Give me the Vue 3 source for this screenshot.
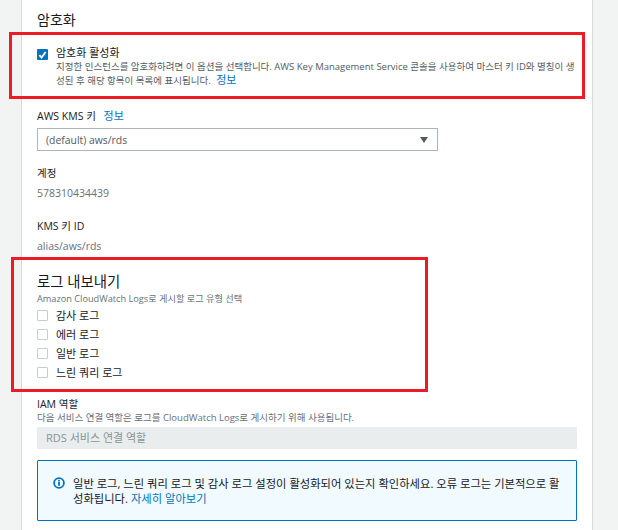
<template>
  <div class="page">
    <section class="panel">
      <h2 class="title">암호화</h2>

      <div class="enable-row">
        <span class="check on">
          <svg width="12" height="12" viewBox="0 0 12 12"><path d="M2.6 6.2 L5 8.8 L9.4 2.8" fill="none" stroke="#fff" stroke-width="2" /></svg>
        </span>
        <div class="enable-text">
          <div class="enable-label">암호화 활성화</div>
          <p class="desc-long">지정한 인스턴스를 암호화하려면 이 옵션을 선택합니다. AWS Key Management Service 콘솔을 사용하여 마스터 키 ID와 별칭이 생성된 후 해당 항목이 목록에 표시됩니다. <a class="link big">정보</a></p>
        </div>
      </div>

      <div class="kms-label">AWS KMS 키 <a class="link info">정보</a></div>
      <div class="select">
        <span>(default) aws/rds</span>
        <span class="caret"></span>
      </div>

      <div class="field-label account">계정</div>
      <div class="value">578310434439</div>
      <div class="field-label kms-id">KMS 키 ID</div>
      <div class="value">alias/aws/rds</div>

      <h3 class="log-title">로그 내보내기</h3>
      <div class="hint">Amazon CloudWatch Logs로 게시할 로그 유형 선택</div>
      <div class="log-list">
        <label v-for="item in logs" :key="item" class="log-row">
          <span class="check"></span>
          <span>{{ item }}</span>
        </label>
      </div>

      <div class="field-label iam">IAM 역할</div>
      <div class="hint iam-hint">다음 서비스 연결 역할은 로그를 CloudWatch Logs로 게시하기 위해 사용됩니다.</div>
      <div class="role-input">RDS 서비스 연결 역할</div>

      <div class="alert">
        <svg class="alert-icon" width="12" height="12" viewBox="0 0 12 12">
          <circle cx="6" cy="6" r="4.9" fill="none" stroke="#0073bb" stroke-width="1.8" />
          <rect x="5.1" y="5" width="1.8" height="3.8" fill="#0073bb" />
          <rect x="5.1" y="2.9" width="1.8" height="1.5" fill="#0073bb" />
        </svg>
        <p>일반 로그, 느린 쿼리 로그 및 감사 로그 설정이 활성화되어 있는지 확인하세요. 오류 로그는 기본적으로 활성화됩니다. <a class="link">자세히 알아보기</a></p>
      </div>
    </section>

    <div class="red-box box-one"></div>
    <div class="red-box box-two"></div>
  </div>
</template>

<script setup>
const logs = ['감사 로그', '에러 로그', '일반 로그', '느린 쿼리 로그']
</script>

<style>
html, body { margin: 0; background: #f2f3f3; }
</style>

<style scoped>
.page {
  position: relative;
  width: 618px;
  height: 530px;
  overflow: hidden;
  background: #f2f3f3;
  font-family: "Open Sans", "Noto Sans CJK KR", sans-serif;
  color: #16191f;
}
.panel {
  box-sizing: border-box;
  width: 572px;
  height: 530px;
  margin-left: 21px;
  padding: 0 15px 0 15px;
  background: #fff;
  border-left: 1px solid #d5dbdb;
  border-right: 1px solid #d5dbdb;
}
.title {
  margin: 0;
  padding-top: 11px;
  font-size: 14px;
  font-weight: 400;
  line-height: 18px;
}
.check {
  flex: none;
  box-sizing: border-box;
  display: block;
  width: 11px;
  height: 11px;
  border: 1px solid #c6cdce;
  border-radius: 1px;
  background: #fff;
}
.check.on {
  display: flex;
  align-items: center;
  justify-content: center;
  border: 0;
  background: #0073bb;
}
.enable-row {
  display: flex;
  gap: 8px;
  margin-top: 18px;
  padding-top: 2px;
}
.enable-text { width: 520px; margin-top: -2px; }
.enable-label { font-size: 11px; line-height: 12px; }
.desc-long {
  margin: 1px 0 0;
  font-size: 9.5px;
  line-height: 13px;
  color: #545b64;
}
.link { color: #0073bb; }
.big { margin-left: 3px; font-size: 11px; }
.info { margin-left: 5px; font-size: 11px; }
.kms-label {
  margin-top: 22px;
  font-size: 10.5px;
  line-height: 14px;
}
.select {
  box-sizing: border-box;
  display: flex;
  align-items: center;
  justify-content: space-between;
  width: 401px;
  height: 23px;
  margin-top: 5px;
  padding: 0 8px;
  border: 1px solid #aab7b8;
  font-size: 10.4px;
  color: #545b64;
}
.caret {
  width: 0;
  height: 0;
  margin-right: 1px;
  border-left: 4px solid transparent;
  border-right: 4px solid transparent;
  border-top: 6px solid #545b64;
}
.field-label {
  font-size: 10.5px;
  line-height: 14px;
}
.account { margin-top: 15px; }
.kms-id { margin-top: 19px; }
.value {
  margin-top: 6px;
  font-size: 10.5px;
  line-height: 14px;
  color: #687078;
}
.log-title {
  margin: 20px 0 0;
  font-size: 14.4px;
  font-weight: 400;
  line-height: 18px;
}
.hint {
  font-size: 9.2px;
  line-height: 13px;
  color: #687078;
}
.log-title + .hint { margin-top: 1px; }
.iam-hint { font-size: 9.5px; }
.log-list {
  display: flex;
  flex-direction: column;
  gap: 5px;
  margin-top: 3px;
}
.log-row {
  display: flex;
  align-items: center;
  gap: 8px;
  height: 14px;
  font-size: 11px;
}
.iam { margin-top: 18px; }
.role-input {
  box-sizing: border-box;
  width: 540px;
  height: 22px;
  margin-top: 3px;
  padding-left: 9px;
  background: #eaeded;
  border-radius: 1px;
  font-size: 11px;
  line-height: 22px;
  color: #879596;
}
.alert {
  box-sizing: border-box;
  display: flex;
  width: 540px;
  height: 61px;
  margin-top: 11px;
  padding: 15px 12px 0 15px;
  border: 1px solid #0073bb;
  border-radius: 1px;
  background: #f1faff;
}
.alert-icon { flex: none; margin: 1px 8px 0 0; }
.alert p {
  margin: 0;
  font-size: 11.3px;
  line-height: 15px;
}
.red-box {
  position: absolute;
  box-sizing: border-box;
  border: 3px solid #ed1c24;
  pointer-events: none;
}
.box-one { left: 9px; top: 32px; width: 576px; height: 67px; }
.box-two { left: 11px; top: 257px; width: 417px; height: 135px; }
</style>
